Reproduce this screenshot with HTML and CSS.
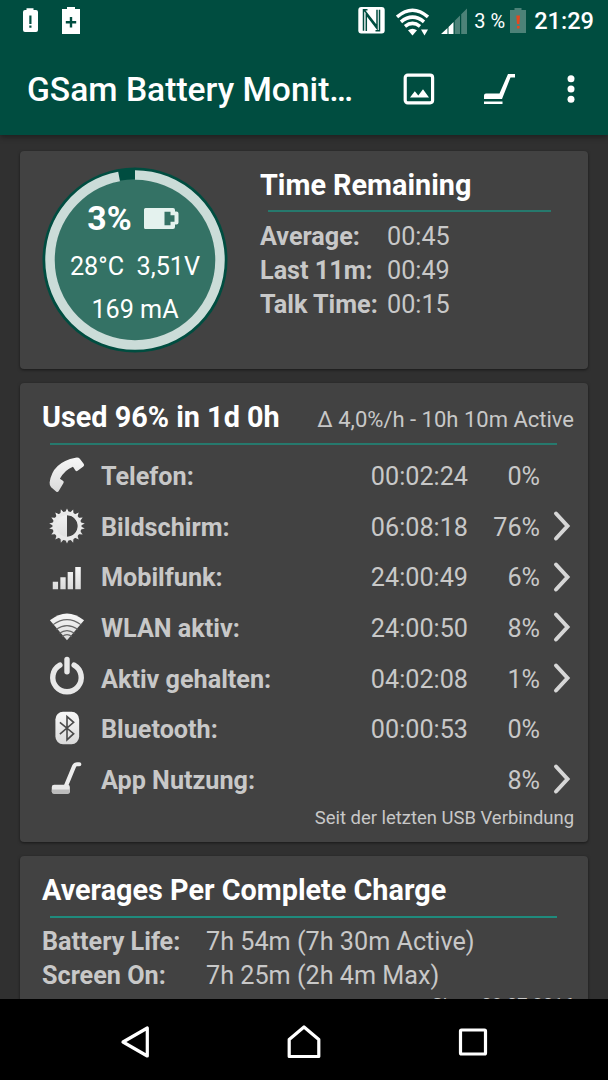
FILE: index.html
```
<!DOCTYPE html>
<html lang="de">
  <head>
    <meta charset="UTF-8" />
    <meta name="viewport" content="width=device-width, initial-scale=1.0" />
    <title>GSam Battery Monitor</title>
    <link rel="stylesheet" href="styles.css">
  </head>
  <body>
    <header>
      <!-- Android status bar -->
      <div class="status-bar">
        <svg class="notify-icon" width="64" height="30" viewBox="0 0 64 30">
          <path fill="#fff" fill-rule="evenodd" d="M8.500 3V1.200h7V3h2.500q2 0 2 2v18q0 2-2 2H7q-2 0-2-2V5q0-2 2-2zM11.300 8.500h2.200v8.500h-2.200zM11.300 18.500h2.200v2.300h-2.200z" />
          <path fill="#fff" fill-rule="evenodd" d="M44 2h5V0h8v2h5v25H44zM51.800 10h2.400v4h4v2.400h-4v4h-2.400v-4h-4V14h4z" />
        </svg>

        <div class="status-right">
          <svg class="nfc" width="27" height="27" viewBox="0 0 27 27">
            <rect x="0.300" y="0" width="26.400" height="26.500" rx="3" fill="#fff" />
            <path d="M9.500 2.800H5.500v21M8.300 24V7.500L19 21.500V2.800M17.500 23.800h4V2.800M19 19.500L6 2.800" fill="none" stroke="#004d40" stroke-width="1.500" />
          </svg>
          <svg class="wifi" width="33" height="28" viewBox="0 0 33 28">
            <g fill="none" stroke="#fff" stroke-width="3.600">
              <path d="M1 9Q16.500-4.500 32 9" />
              <path d="M5 13.800Q16.500 4.500 28 13.800" />
              <path d="M9 18.300Q16.500 12.500 24 18.300" />
            </g>
            <path d="M12 22.300q4.500-3 9 0L16.500 27.500z" fill="#fff" />
            <path d="M25 21.500h7l-3.500 6z" fill="#fff" />
          </svg>
          <svg class="cell" width="27" height="26" viewBox="0 0 27 26">
            <path d="M0 26L6.500 20v6zM7.500 19L12.500 14v12H7.500z" fill="#fff" />
            <path d="M13.700 12.800L19 7.500V26h-5.300zM20.200 6.300L26 .500V26h-5.800z" fill="#4d8278" />
          </svg>
          <span class="status-percent">3 %</span>
          <svg class="battery" width="16" height="25" viewBox="0 0 16 25">
            <path d="M0 2h4.500V0h7v2H16v23H0z" fill="#4d8278" />
            <path d="M6.300 7.500h3.700l-.6 8.500H7zM7 18h2.600v2.500H7z" fill="#e5491f" />
          </svg>
          <span class="clock">21:29</span>
        </div>
      </div>

      <!-- App bar -->
      <div class="app-bar">
        <h1>GSam Battery Monit…</h1>
        <div class="actions">
          <svg width="32" height="32" viewBox="0 0 32 32">
            <rect x="2.200" y="2.200" width="27.400" height="27.600" rx="2.500" fill="none" stroke="#fff" stroke-width="3.200" />
            <path d="M7 24.500l4.800-6.300 3.500 4.200 4.700-6.200 6 8.300z" fill="#fff" />
          </svg>
          <svg class="vacuum" width="32" height="32" viewBox="0 0 32 32">
            <path d="M1 26v-3.500q0-2 2-2h13.500L25 1h7v3.500h-4.500L19 26zM1 28.500h18.500v2.500H1z" fill="#fff" />
          </svg>
          <svg width="8" height="28" viewBox="0 0 8 28">
            <g fill="#fff">
              <circle cx="4" cy="3.700" r="3.500" />
              <circle cx="4" cy="14" r="3.500" />
              <circle cx="4" cy="24.300" r="3.500" />
            </g>
          </svg>
        </div>
      </div>
    </header>

    <main>
      <section class="card remaining">
        <div class="gauge">
          <svg class="gauge-ring" width="186" height="186" viewBox="0 0 186 186">
            <circle cx="93" cy="93" r="92.500" fill="#004d40" />
            <circle cx="93" cy="93" r="80.700" fill="#347265" />
            <!-- starts at 12 o'clock, 3% left open -->
            <circle cx="93" cy="93" r="85" fill="none" stroke="#cbdcd8" stroke-width="9.500" pathLength="100" stroke-dasharray="97 3" transform="rotate(-90 93 93)" />
          </svg>
          <div class="gauge-text">
            <div class="level">
              <b>3%</b>
              <svg width="35" height="21" viewBox="0 0 35 21">
                <path fill="#e4f2ee" fill-rule="evenodd" d="M0 1.500Q0 0 1.500 0H29q2 0 2 2v1.500h1.500q2 0 2 2v9q0 2-2 2H31V19q0 2-2 2H1.500Q0 21 0 19.500zM20.500 3.800v13.500h6v-3.500h4V7.200h-4V3.800z" />
              </svg>
            </div>
            <div class="temp">28°C&nbsp; 3,51V</div>
            <div class="current">169 mA</div>
          </div>
        </div>

        <div class="times">
          <h2>Time Remaining</h2>
          <div class="rule"></div>
          <dl>
            <dt>Average:</dt><dd>00:45</dd>
            <dt>Last 11m:</dt><dd>00:49</dd>
            <dt>Talk Time:</dt><dd>00:15</dd>
          </dl>
        </div>
      </section>

      <section class="card usage">
        <div class="card-head">
          <h2>Used 96% in 1d 0h</h2>
          <span>Δ 4,0%/h - 10h 10m Active</span>
        </div>
        <div class="rule"></div>

        <svg class="defs" width="0" height="0">
          <linearGradient id="shade" x1="0" y1="0" x2="0" y2="1">
            <stop offset="0" stop-color="#f7f7f7" />
            <stop offset="1" stop-color="#dadada" />
          </linearGradient>
          <symbol id="chevron" viewBox="0 0 20 32">
            <path d="M4 3.500L15.500 16 4 28.500" fill="none" stroke="#d6d6d6" stroke-width="4" stroke-linecap="round" />
          </symbol>
        </svg>

        <div class="row">
          <svg class="icon" viewBox="0 0 40 40">
            <path fill="url(#shade)" d="M29 1.800q3-.6 4.500 1l4.200 5.700q1 1.500-.5 2.500l-6 4.500q-1.500 1-2.300-.3l-2.600-4Q17.500 14.500 12.500 24l3.200 2q1.500 1 .6 2.300l-5 8.500q-1 1.700-2.500.7l-5.500-4.500Q1.500 31.300 1.700 28 4.500 6.500 29 1.800z" />
          </svg>
          <b>Telefon:</b><span class="time">00:02:24</span><span class="pct">0%</span>
        </div>
        <div class="row">
          <svg class="icon" viewBox="0 0 40 40">
            <path fill="url(#shade)" fill-rule="evenodd" d="M20 1.500l2.500 5.300 4-4.300.4 5.900 5.400-2.500-1.700 5.600 5.900-.4-3.500 4.700 5.700 1.600L33.800 20l4.900 2.600-5.700 1.600 3.500 4.700-5.900-.4 1.700 5.600-5.400-2.500-.4 5.900-4-4.300L20 38.500l-2.500-5.300-4 4.300-.4-5.900-5.400 2.500 1.700-5.600-5.900.4L7 24.200l-5.700-1.600L6.200 20l-4.900-2.600L7 15.800l-3.500-4.700 5.900.4-1.700-5.600 5.400 2.500.4-5.900 4 4.300zM20 8.500v23a11.500 11.500 0 0 0 0-23z" />
            <circle cx="20" cy="20" r="13.300" fill="none" stroke="#e9e9e9" stroke-width="4" />
          </svg>
          <b>Bildschirm:</b><span class="time">06:08:18</span><span class="pct">76%</span>
          <svg class="chevron"><use href="#chevron" /></svg>
        </div>
        <div class="row">
          <svg class="icon" viewBox="0 0 40 40">
            <path fill="url(#shade)" d="M5 26h5.600v8H5zM13 21.200h5.600V34H13zM20.700 15.700h5.600V34h-5.600zM28.700 10.500h5.800V34h-5.800z" />
          </svg>
          <b>Mobilfunk:</b><span class="time">24:00:49</span><span class="pct">6%</span>
          <svg class="chevron"><use href="#chevron" /></svg>
        </div>
        <div class="row">
          <svg class="icon" viewBox="0 0 40 40">
            <path fill="url(#shade)" d="M2 13Q20-1.500 38 13L20 34z" />
            <g fill="none" stroke="#666" stroke-width="1.200">
              <path d="M5 17.800Q20 6.500 35 17.800" />
              <path d="M8.500 22.500Q20 14.500 31.500 22.500" />
              <path d="M12 26.500Q20 21 28 26.500" />
              <path d="M15 30Q20 26 25 30" />
            </g>
          </svg>
          <b>WLAN aktiv:</b><span class="time">24:00:50</span><span class="pct">8%</span>
          <svg class="chevron"><use href="#chevron" /></svg>
        </div>
        <div class="row">
          <svg class="icon" viewBox="0 0 40 40">
            <g fill="none" stroke="#e8e8e8" stroke-width="5.700" stroke-linecap="round">
              <path d="M12.500 6.500A15 15 0 1 0 27.500 6.500" />
              <path d="M20 .500v13" />
            </g>
          </svg>
          <b>Aktiv gehalten:</b><span class="time">04:02:08</span><span class="pct">1%</span>
          <svg class="chevron"><use href="#chevron" /></svg>
        </div>
        <div class="row">
          <svg class="icon" viewBox="0 0 40 40">
            <rect x="7.800" y="3" width="25" height="34" rx="8" fill="url(#shade)" />
            <path d="M12.500 14l14.500 12L20 32.500V8l7 6L12.500 26.500" fill="none" stroke="#4a4a4a" stroke-width="1.700" />
          </svg>
          <b>Bluetooth:</b><span class="time">00:00:53</span><span class="pct">0%</span>
        </div>
        <div class="row">
          <svg class="icon" viewBox="0 0 40 40">
            <path d="M19 27L27.500 6.500q1-2 3-2H33" fill="none" stroke="#ededed" stroke-width="4.300" stroke-linecap="round" />
            <rect x="4" y="26" width="19" height="9.500" rx="2.500" fill="#e8e8e8" />
            <path d="M4 31h19v2.500q0 2-2 2H6q-2 0-2-2z" fill="#bbb" />
          </svg>
          <b>App Nutzung:</b><span class="time"></span><span class="pct">8%</span>
          <svg class="chevron"><use href="#chevron" /></svg>
        </div>

        <div class="note">Seit der letzten USB Verbindung</div>
      </section>

      <section class="card averages">
        <h2>Averages Per Complete Charge</h2>
        <div class="rule"></div>
        <dl>
          <dt>Battery Life:</dt><dd>7h 54m (7h 30m Active)</dd>
          <dt>Screen On:</dt><dd>7h 25m (2h 4m Max)</dd>
        </dl>
        <div class="note">Since 08.07.2016</div>
      </section>
    </main>

    <!-- Android navigation buttons -->
    <nav>
      <svg width="32" height="36" viewBox="0 0 32 36">
        <path d="M28.300 4v28L4 18z" fill="none" stroke="#fff" stroke-width="3.200" stroke-linejoin="round" />
      </svg>
      <svg width="36" height="36" viewBox="0 0 36 36">
        <path d="M3.200 32.500V15.500L18 3l14.800 12.500v17z" fill="none" stroke="#fff" stroke-width="3.200" stroke-linejoin="round" />
      </svg>
      <svg width="32" height="36" viewBox="0 0 32 36">
        <rect x="3.500" y="6" width="25" height="24" rx="1" fill="none" stroke="#fff" stroke-width="3.200" />
      </svg>
    </nav>
  </body>
</html>
```
FILE: styles.css
```
* {
  box-sizing: border-box;
}

body {
  font-family: Roboto, sans-serif;
  margin: 0;
  height: 1080px;
  display: flex;
  flex-direction: column;
  overflow: hidden;
  background: #303030;
  color: #c8c8c8;
  font-size: 25.2px;
}

svg {
  display: block;
  flex: none;
}

h1,
h2,
dl,
dd {
  margin: 0;
}

header {
  height: 135px;
  flex: none;
  background: #004d40;
  color: #fff;
  box-shadow: 0 2px 6px rgba(0, 0, 0, 0.4);
  z-index: 1;
}

.status-bar {
  height: 42px;
  padding: 7px 14px 0 20px;
  display: flex;
  justify-content: space-between;
}

.notify-icon {
  margin-left: -2px;
}

.status-right {
  display: flex;
  align-items: flex-start;
}

.wifi {
  margin: 1px 0 0 11px;
}

.cell {
  margin: 1px 0 0 12px;
}

.status-percent {
  font-size: 20px;
  line-height: 28px;
  margin-left: 6px;
}

.battery {
  margin: 1px 8px 0 5px;
}

.clock {
  font-size: 23.6px;
  font-weight: 500;
  line-height: 28px;
}

.app-bar {
  height: 93px;
  padding: 0 33px 0 27px;
  display: flex;
  align-items: center;
  justify-content: space-between;
}

.app-bar h1 {
  font-size: 33.6px;
  font-weight: 500;
  padding-top: 1px;
}

.actions {
  display: flex;
  align-items: center;
  gap: 50px;
}

.vacuum {
  margin: 0 2px 0 -2px;
}

main {
  flex: 1;
  min-height: 0;
  overflow: hidden;
  padding: 16px 20px 0;
  display: flex;
  flex-direction: column;
  gap: 14px;
}

.card {
  flex: none;
  background: #424242;
  border-radius: 4px;
  box-shadow: 0 1px 3px rgba(0, 0, 0, 0.5);
  padding: 0 14px 0 22px;
}

h2 {
  font-size: 28.8px;
  font-weight: 700;
  color: #fff;
  line-height: 36px;
  white-space: nowrap;
}

.rule {
  height: 2px;
  background: #26796d;
  margin: 0 17px 0 8px;
}

dl {
  display: grid;
  grid-template-columns: 127px 1fr;
  line-height: 34.2px;
  white-space: nowrap;
}

dt {
  font-weight: 700;
}

/* Time remaining */
.remaining {
  height: 218px;
  display: flex;
  gap: 32px;
}

.gauge {
  width: 186px;
  height: 186px;
  margin-top: 16px;
  display: grid;
}

.gauge-ring,
.gauge-text {
  grid-area: 1 / 1;
}

.gauge-text {
  color: #fff;
  text-align: center;
  z-index: 1;
}

.level {
  display: flex;
  align-items: center;
  justify-content: center;
  gap: 12px;
  margin: 30px 4px 0 0;
  height: 42px;
  font-size: 33.8px;
}

.temp {
  line-height: 42px;
  margin-top: 7px;
}

.current {
  line-height: 43px;
}

.times {
  flex: 1;
  padding-top: 16px;
}

.times .rule {
  margin: 7px 23px 8px 8px;
}

/* Usage list */
.usage {
  height: 459px;
  padding-top: 16px;
}

.card-head {
  display: flex;
  justify-content: space-between;
  align-items: baseline;
  height: 36px;
  margin-bottom: 8px;
}

.card-head span {
  font-size: 22px;
}

.defs {
  position: absolute;
}

.row {
  height: 50.7px;
  display: grid;
  grid-template-columns: 51px 1fr 110px 72px 34px;
  align-items: center;
  padding-left: 8px;
}

.usage .rule + .defs + .row {
  margin-top: 6px;
}

.icon {
  width: 38px;
  height: 38px;
  margin: -3px 0 0 -2px;
  overflow: visible;
}

.time,
.pct {
  text-align: right;
}

.chevron {
  width: 20px;
  height: 32px;
  margin: -2px 0 0 12px;
}

.note {
  font-size: 18.45px;
  line-height: 24px;
  text-align: right;
}

/* Averages */
.averages {
  height: 180px;
  padding-top: 16px;
}

.averages .rule {
  margin-top: 8px;
  margin-bottom: 7px;
  background: #1f8b7d;
}

.averages dl {
  grid-template-columns: 164px 1fr;
}

nav {
  height: 81px;
  flex: none;
  background: #000;
  display: flex;
  align-items: center;
  justify-content: space-between;
  padding: 5px 119px 0;
}
```
